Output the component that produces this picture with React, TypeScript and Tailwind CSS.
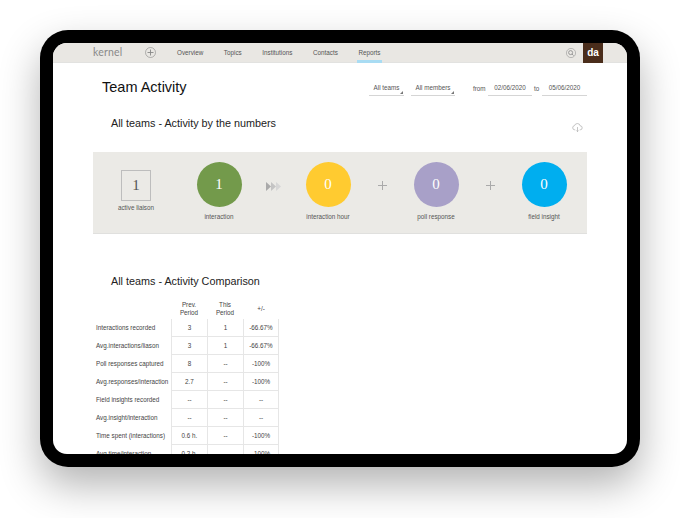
const rows = [
  ["Interactions recorded", "3", "1", "-66.67%"],
  ["Avg.interactions/liason", "3", "1", "-66.67%"],
  ["Poll responses captured", "8", "--", "-100%"],
  ["Avg.responses/interaction", "2.7", "--", "-100%"],
  ["Field insights recorded", "--", "--", "--"],
  ["Avg.insight/interaction", "--", "--", "--"],
  ["Time spent (interactions)", "0.6 h.", "--", "-100%"],
  ["Avg.time/interaction", "0.2 h.", "--", "-100%"],
];

const Circle = ({ color, value, label }: { color: string; value: string; label: string }) => (
  <div className="flex flex-col items-center w-[80px] shrink-0">
    <div className={`${color} w-[45px] h-[45px] rounded-full flex items-center justify-center text-white text-[15px] font-['Liberation_Serif',serif]`}>
      {value}
    </div>
    <span className="mt-[6px] text-[6.3px] leading-[8px] text-[#555]">{label}</span>
  </div>
);

const Plus = () => (
  <div className="w-[28px] shrink-0 flex justify-center pt-[19px]">
    <svg className="w-[9px] h-[9px]" viewBox="0 0 9 9" stroke="#aaa" strokeWidth="1">
      <path d="M0 4.5H9M4.5 0V9" />
    </svg>
  </div>
);

const App = () => {
  return (
    <div className="w-[680px] h-[518px] bg-white pt-[30px] pl-[40px] font-['Liberation_Sans',sans-serif] overflow-hidden">
      <div className="w-[600px] h-[437px] bg-black rounded-[28px] p-[13px] shadow-[0_18px_40px_rgba(0,0,0,0.3)]">
        <div className="w-[574px] h-[411px] bg-white rounded-[14px] overflow-hidden antialiased">
          {/* top nav */}
          <div className="flex items-center h-[20px] bg-[#e9e7e3] border-b border-[#e2e2e0] pl-[40px] relative">
            <span className="w-[52px] text-[10.5px] tracking-[0.2px] text-[#8a8a8a] font-['Lato',sans-serif]">kernel</span>
            <svg className="w-[11px] h-[11px]" viewBox="0 0 11 11" fill="none" stroke="#888" strokeWidth="0.6">
              <circle cx="5.5" cy="5.5" r="5" />
              <path d="M2.5 5.5H8.5M5.5 2.5V8.5" strokeWidth="0.9" />
            </svg>
            <div className="flex gap-[20.6px] ml-[21px] text-[6.3px] text-[#555] h-full items-center">
              <span>Overview</span>
              <span>Topics</span>
              <span>Institutions</span>
              <span>Contacts</span>
              <span className="relative h-full flex items-center">
                Reports
                <span className="absolute left-[-1px] right-[-1px] bottom-[-1px] h-[3px] bg-[#a9dcf3]" />
              </span>
            </div>
            <div className="ml-auto flex items-center h-full mr-[24px]">
              <svg className="w-[10px] h-[10px] mr-[7px]" viewBox="0 0 10 10" fill="none" stroke="#888" strokeWidth="0.5">
                <circle cx="5" cy="5" r="4.6" />
                <circle cx="4.6" cy="4.6" r="2" strokeWidth="0.8" />
                <path d="M6 6L7.6 7.6" strokeWidth="0.8" />
              </svg>
              <div className="w-[20px] h-[20px] bg-[#4a2d1b] text-white text-[10px] font-bold flex items-center justify-center">
                da
              </div>
            </div>
          </div>

          {/* title and filters */}
          <div className="flex items-start pl-[49px] pr-[40px] pt-[15px]">
            <h1 className="text-[14.5px] leading-[18px] text-[#111]">Team Activity</h1>
            <div className="ml-auto flex items-start text-[6.3px] text-[#555] mt-[3px]">
              <div className="relative w-[35px] h-[15px] border-b border-[#d5d5d5] text-center leading-[12px] pt-[1px]">
                All teams
                <span className="absolute right-[1px] bottom-[1px] w-0 h-0 border-l-[3px] border-b-[3px] border-l-transparent border-b-[#777]" />
              </div>
              <div className="relative w-[44px] h-[15px] ml-[7px] border-b border-[#d5d5d5] text-center leading-[12px] pt-[1px]">
                All members
                <span className="absolute right-[1px] bottom-[1px] w-0 h-0 border-l-[3px] border-b-[3px] border-l-transparent border-b-[#777]" />
              </div>
              <span className="ml-[18px] w-[15px] mt-[4px] leading-[8px]">from</span>
              <div className="w-[44px] h-[15px] border-b border-[#d5d5d5] text-center leading-[12px] pt-[1px]">02/06/2020</div>
              <span className="ml-[2px] w-[8px] mt-[4px] leading-[8px]">to</span>
              <div className="w-[45px] h-[15px] border-b border-[#d5d5d5] text-center leading-[12px] pt-[1px]">05/06/2020</div>
            </div>
          </div>

          <div className="flex items-start pl-[58px] pr-[44px] mt-[21px]">
            <h2 className="text-[10.8px] leading-[13px] text-[#222]">All teams - Activity by the numbers</h2>
            <svg className="ml-auto mt-[5px] w-[11px] h-[11px]" viewBox="0 0 24 24" fill="none" stroke="#aaa" strokeWidth="1.5">
              <path d="M7 17H6a4.5 4.5 0 0 1-.6-8.96A6.5 6.5 0 0 1 18 8.5a4.2 4.2 0 0 1 0 8.5h-1" />
              <path d="M12 11v10M9.5 18.5L12 21l2.5-2.5" />
            </svg>
          </div>

          {/* numbers panel */}
          <div className="flex items-start ml-[40px] w-[494px] h-[82px] mt-[19px] pt-[10px] bg-[#ebeae6] border-b border-[#e0e0de]">
            <div className="flex flex-col items-center w-[80px] ml-[3px] mr-[3px] pt-[8px] shrink-0">
              <div className="w-[30px] h-[31px] border border-[#bdbdbd] flex items-center justify-center text-[15px] text-[#555] font-['Liberation_Serif',serif]">
                1
              </div>
              <span className="mt-[3px] text-[6.3px] leading-[8px] text-[#555]">active liaison</span>
            </div>
            <Circle color="bg-[#739a4b]" value="1" label="interaction" />
            <div className="w-[29px] shrink-0 flex justify-center pt-[20px]">
              <svg className="w-[15px] h-[9px]" viewBox="0 0 15 9">
                <path d="M0 0L5 4.5L0 9Z" fill="#aaa" />
                <path d="M5 0L10 4.5L5 9Z" fill="#c4c4c4" />
                <path d="M10 0L15 4.5L10 9Z" fill="#d6d6d6" />
              </svg>
            </div>
            <Circle color="bg-[#ffcb30]" value="0" label="interaction hour" />
            <Plus />
            <Circle color="bg-[#a8a0c8]" value="0" label="poll response" />
            <Plus />
            <Circle color="bg-[#00aeef]" value="0" label="field insight" />
          </div>

          <h2 className="ml-[58px] mt-[41px] text-[10.8px] leading-[13px] text-[#222]">All teams - Activity Comparison</h2>

          {/* comparison table */}
          <div className="ml-[43px] mt-[11px] text-[6.3px] text-[#444]">
            <div className="flex h-[20px] items-center leading-[8px] text-center">
              <span className="w-[75px]" />
              <span className="w-[36px]">Prev.<br />Period</span>
              <span className="w-[36px]">This<br />Period</span>
              <span className="w-[36px]">+/-</span>
            </div>
            {rows.map((r) => (
              <div key={r[0]} className="flex h-[18px] items-center">
                <span className="w-[75px] whitespace-nowrap">{r[0]}</span>
                {r.slice(1).map((c, j) => (
                  <span key={j} className="w-[36px] h-full flex items-center justify-center border-l border-b border-[#e6e6e6] last:border-r">
                    {c}
                  </span>
                ))}
              </div>
            ))}
          </div>
        </div>
      </div>
    </div>
  );
};

export default App;
